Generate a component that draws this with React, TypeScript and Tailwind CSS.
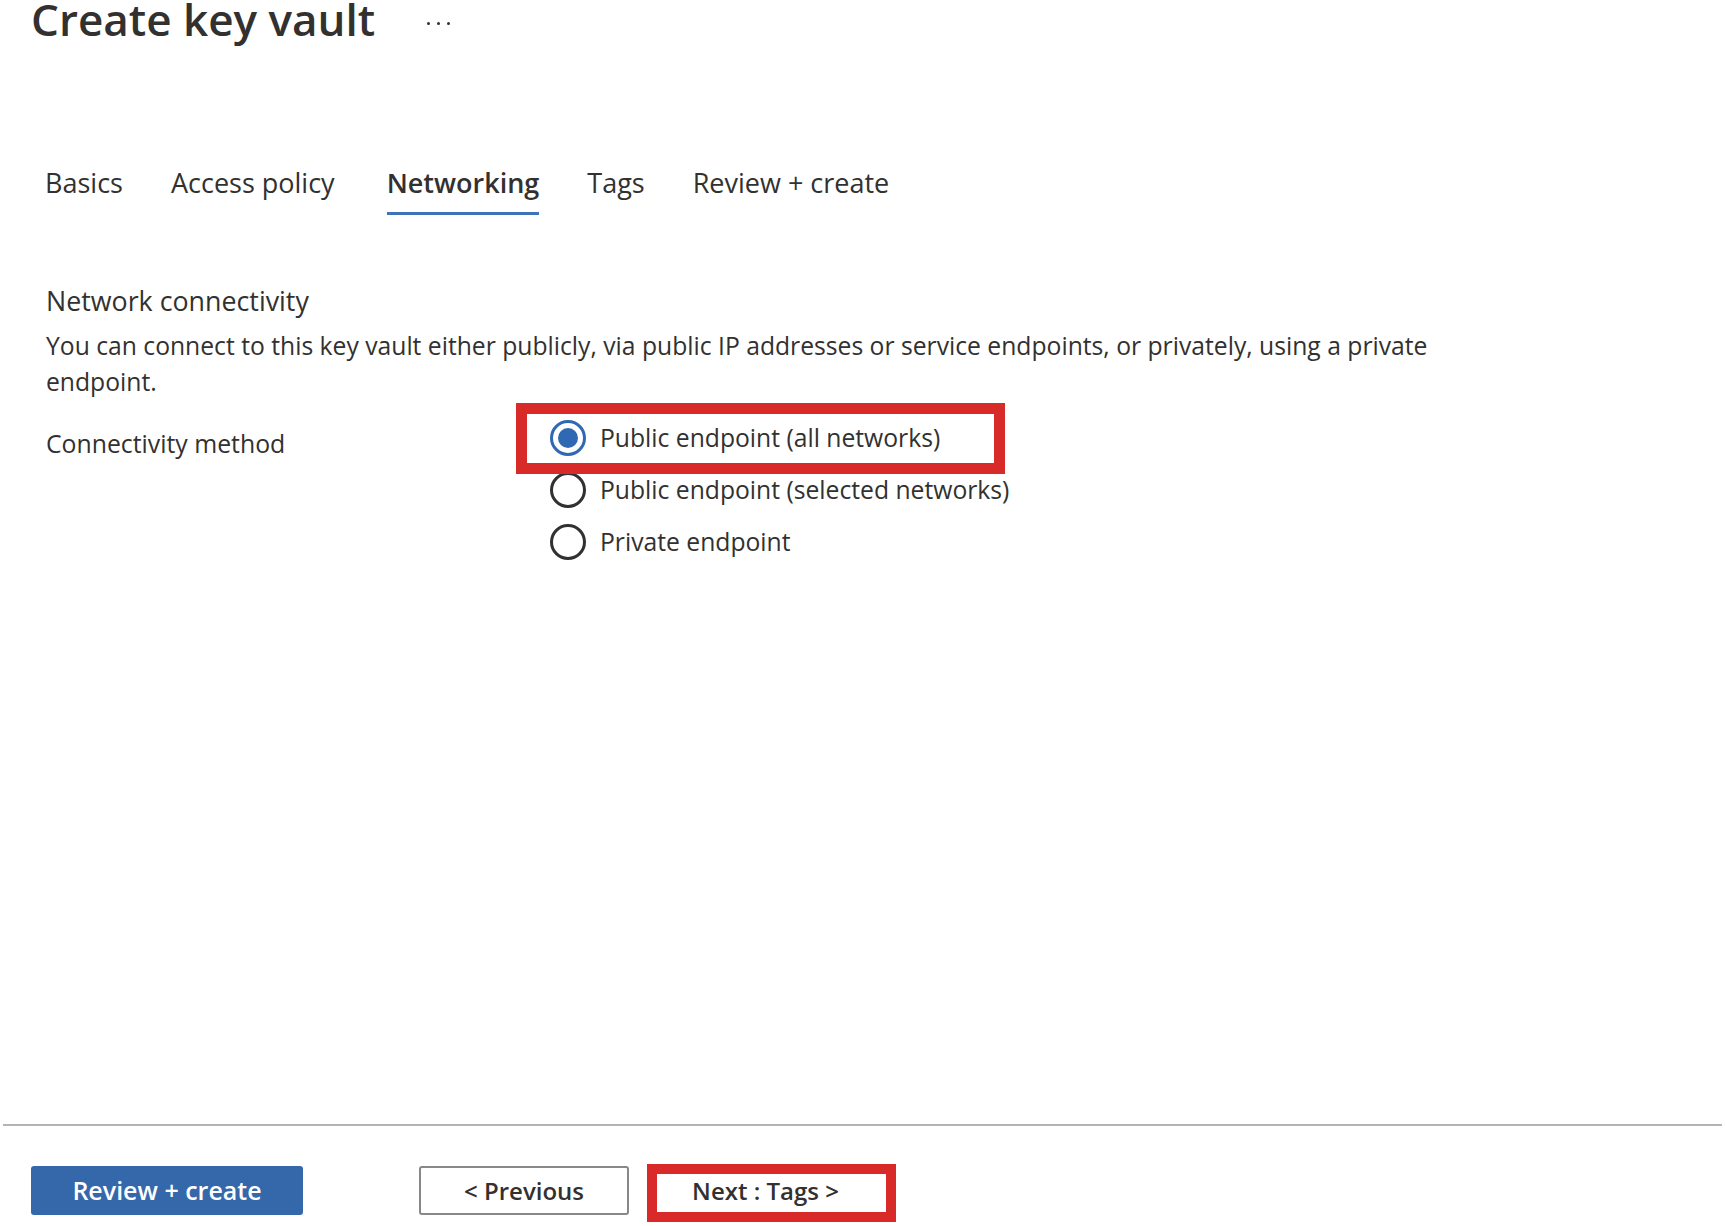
import React from "react";

const tabs = ["Basics", "Access policy", "Networking", "Tags", "Review + create"];

const methods = [
  "Public endpoint (all networks)",
  "Public endpoint (selected networks)",
  "Private endpoint",
];

function Radio({ checked }: { checked: boolean }) {
  if (checked) {
    return (
      <span className="flex h-[36px] w-[36px] shrink-0 items-center justify-center rounded-full border-[3px] border-[#2f69b3]">
        <span className="h-[20px] w-[20px] rounded-full bg-[#2f69b3]" />
      </span>
    );
  }
  return <span className="h-[36px] w-[36px] shrink-0 rounded-full border-[3px] border-[#323130]" />;
}

export default function App() {
  return (
    <div className="flex h-[1226px] flex-col overflow-hidden bg-white font-['Open_Sans','Noto_Sans',sans-serif] text-[#323130]">
      <main className="flex-1">
        {/* Title */}
        <header className="flex items-start pl-[31px] pt-[1px]">
          <h1 className="text-[44px] font-semibold leading-[36px] text-[#323130]">Create key vault</h1>
          <div className="ml-[52px] mt-[21px] flex gap-[7px]">
            <span className="h-[3px] w-[3px] rounded-full bg-[#323130]" />
            <span className="h-[3px] w-[3px] rounded-full bg-[#323130]" />
            <span className="h-[3px] w-[3px] rounded-full bg-[#323130]" />
          </div>
        </header>

        {/* Tabs */}
        <nav className="mt-[129px] flex gap-[48px] pl-[45px]">
          {tabs.map((tab) => {
            const active = tab === "Networking";
            return (
              <div key={tab} className={`flex flex-col ${active ? "ml-[4px]" : ""}`}>
                <span className={`text-[27px] leading-[34px] ${active ? "font-semibold" : ""}`}>{tab}</span>
                <span className={`mt-[12px] h-[3px] ${active ? "bg-[#3f73b9]" : "bg-transparent"}`} />
              </div>
            );
          })}
        </nav>

        {/* Network connectivity */}
        <section className="pl-[46px]">
          <h2 className="mt-[69px] text-[26.8px] leading-[34px]">Network connectivity</h2>
          <p className="mt-[10px] max-w-[1440px] text-[24.7px] leading-[36px]">
            You can connect to this key vault either publicly, via public IP addresses or service endpoints, or
            privately, using a private endpoint.
          </p>

          <div className="mt-[12px] flex">
            <div className="w-[504px] pt-[13px] text-[24.8px] leading-[36px]">Connectivity method</div>
            <div className="relative flex flex-col">
              {methods.map((m, i) => (
                <label key={m} className="flex h-[52px] items-center gap-[14px] text-[24.7px] leading-[36px]">
                  <Radio checked={i === 0} />
                  <span>{m}</span>
                </label>
              ))}
              <div className="pointer-events-none absolute left-[-34px] top-[-9px] h-[71px] w-[489px] border-[11px] border-[#d92a2a]" />
            </div>
          </div>
        </section>
      </main>

      {/* Footer */}
      <footer className="pb-[11px]">
        <div className="mx-[3px] h-[2px] bg-[#b4b4b4]" />
        <div className="mt-[40px] flex pl-[31px]">
          <button className="h-[49px] w-[272px] rounded-[3px] bg-[#3568ab] text-[25px] font-semibold text-white">
            Review + create
          </button>
          <button className="ml-[116px] h-[49px] w-[210px] rounded-[3px] border-2 border-[#8a8886] bg-white text-[24px] font-semibold">
            &lt; Previous
          </button>
          <button className="relative ml-[18px] h-[49px] w-[245px] rounded-[3px] border-2 border-[#8a8886] bg-white pr-[8px] text-[24px] font-semibold">
            Next : Tags &gt;
            <span className="pointer-events-none absolute left-[-2px] top-[-4px] h-[58px] w-[249px] border-[10px] border-[#d92a2a]" />
          </button>
        </div>
      </footer>
    </div>
  );
}
